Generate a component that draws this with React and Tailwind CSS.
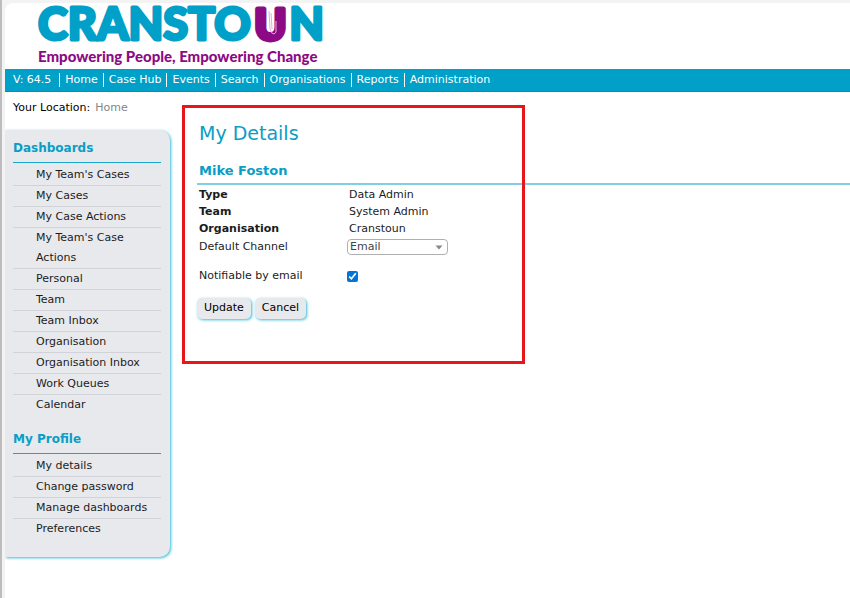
const navItems = [
  "Home",
  "Case Hub",
  "Events",
  "Search",
  "Organisations",
  "Reports",
  "Administration",
];

const menus = [
  {
    title: "Dashboards",
    items: [
      "My Team's Cases",
      "My Cases",
      "My Case Actions",
      "My Team's Case Actions",
      "Personal",
      "Team",
      "Team Inbox",
      "Organisation",
      "Organisation Inbox",
      "Work Queues",
      "Calendar",
    ],
  },
  {
    title: "My Profile",
    items: ["My details", "Change password", "Manage dashboards", "Preferences"],
  },
];

const details = [
  { label: "Type", value: "Data Admin" },
  { label: "Team", value: "System Admin" },
  { label: "Organisation", value: "Cranstoun" },
];

function Logo() {
  return (
    <div className="flex h-[66px] flex-col text-[#8c0b84]">
      <svg
        width="300"
        height="43"
        viewBox="0 0 300 43"
        className="block overflow-visible"
      >
        <text
          x="1"
          y="37"
          fill="#00a0c8"
          stroke="#00a0c8"
          strokeWidth="3"
          strokeLinejoin="round"
          className="font-['Lato',sans-serif] text-[45px] font-black"
        >
          CRANSTO
          <tspan
            dx="4"
            fill="#8c0b84"
            stroke="#8c0b84"
            strokeWidth="5"
            className="text-[42px]"
          >
            U
          </tspan>
          <tspan dx="3">N</tspan>
        </text>
        <path
          d="M232 8 L233 26 Q234 31 237 31 Q240 30 239 26 V18 M234 10 L235 26"
          fill="none"
          stroke="#dcb0da"
          strokeWidth="1"
        />
      </svg>
      <p className="pl-px font-['Lato',sans-serif] text-[15px] leading-5 font-black whitespace-nowrap">
        Empowering People, Empowering Change
      </p>
    </div>
  );
}

function TopNav() {
  return (
    <nav className="flex h-[23px] items-center border-b border-[#0092bb] bg-[#00a0c8] pl-2 text-[11px] text-white">
      <span className="pr-2">V: 64.5</span>
      {navItems.map((item) => (
        <a key={item} href="#" className="border-l border-white px-[5px] leading-[14px]">
          {item}
        </a>
      ))}
    </nav>
  );
}

function Sidebar() {
  return (
    <aside className="w-[165px] shrink-0 rounded-r-[10px] bg-[#e8e9ed] pt-2 pr-[9px] pb-[18px] pl-2 shadow-[1px_1px_3px_#35bbd6]">
      {menus.map((menu) => (
        <section key={menu.title} className="pb-[14px] last:pb-0">
          <h2 className="border-b border-[#1aa7cc] pb-1 text-[12px] leading-5 font-bold text-[#0a9dc6]">
            {menu.title}
          </h2>
          <ul className="pt-0.5">
            {menu.items.map((item) => (
              <li
                key={item}
                className="border-b border-[#d2d3d8] pr-1 pl-[23px] leading-5 last:border-b-0"
              >
                <a href="#">{item}</a>
              </li>
            ))}
          </ul>
        </section>
      ))}
    </aside>
  );
}

const buttonClass =
  "h-[21px] rounded-[5px] bg-[#e8e9ed] px-[7px] text-[11px] text-black shadow-[1px_1px_3px_#35bbd6]";

function DetailsForm() {
  return (
    <form className="pl-0.5" onSubmit={(e) => e.preventDefault()}>
      <dl className="pt-px">
        {details.map((row) => (
          <div key={row.label} className="flex leading-[17px]">
            <dt className="w-[150px] font-bold">{row.label}</dt>
            <dd>{row.value}</dd>
          </div>
        ))}
      </dl>

      <div className="flex h-5 items-center">
        <label htmlFor="channel" className="w-[148px]">
          Default Channel
        </label>
        <div className="relative">
          <select
            id="channel"
            defaultValue="Email"
            className="block h-4 w-[101px] appearance-none rounded border border-[#b0b0b0] bg-white pl-0.5 text-[11px] leading-[14px] text-[#444]"
          >
            <option>Email</option>
            <option>SMS</option>
          </select>
          <svg
            width="8"
            height="5"
            viewBox="0 0 8 5"
            className="pointer-events-none absolute top-1.5 right-[5px]"
          >
            <path d="M0.5 0.5H7.5L4 4.5Z" fill="#888" />
          </svg>
        </div>
      </div>

      <div className="mt-[9px] flex h-5 items-center">
        <label htmlFor="notify" className="w-[148px]">
          Notifiable by email
        </label>
        <input
          id="notify"
          type="checkbox"
          defaultChecked
          className="h-[11px] w-[11px] accent-[#0075d7]"
        />
      </div>

      <div className="mt-3 -ml-0.5 flex gap-1">
        <button type="submit" className={buttonClass}>
          Update
        </button>
        <button type="button" className={buttonClass}>
          Cancel
        </button>
      </div>
    </form>
  );
}

export default function App() {
  return (
    <div className="flex min-h-screen bg-[#f3f3f3] font-['DejaVu_Sans',Verdana,sans-serif] text-[11px] text-[#1c1c1c]">
      <div className="w-0.5 shrink-0 bg-[#bdbdbd]" />
      <div className="mt-[3px] ml-[3px] min-w-0 flex-1 overflow-hidden rounded-tl-lg bg-white">
        <header className="pl-8">
          <Logo />
        </header>
        <TopNav />

        <div className="flex items-start">
          <div>
            <p className="flex gap-[5px] pt-1.5 pb-3 pl-2 leading-5 text-black">
              Your Location:
              <a href="#" className="text-[#858585]">
                Home
              </a>
            </p>
            <Sidebar />
          </div>

          <main className="relative ml-[27px] min-w-0 flex-1 pt-[27px]">
            <h1 className="pl-0.5 text-[19px] leading-7 text-[#0a9dc6]">My Details</h1>
            <h2 className="mt-3.5 border-b-2 border-[#7fd0e4] pb-0.5 pl-0.5 text-[13px] leading-5 font-bold text-[#0a9dc6]">
              Mike Foston
            </h2>
            <DetailsForm />

            {/* highlight frame around the details */}
            <div className="pointer-events-none absolute top-[13px] -left-[15px] h-[259px] w-[343px] border-3 border-[#e81519]" />
          </main>
        </div>
      </div>
    </div>
  );
}
